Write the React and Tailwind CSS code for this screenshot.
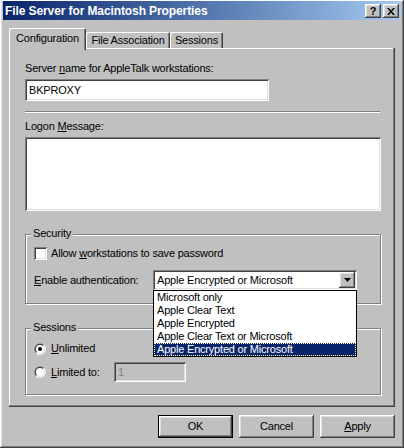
const raised =
  "shadow-[inset_-1px_-1px_#404040,inset_1px_1px_#fff,inset_-2px_-2px_#808080,inset_2px_2px_#dfdfdf]";
const sunken =
  "shadow-[inset_1px_1px_#808080,inset_-1px_-1px_#fff,inset_2px_2px_#404040,inset_-2px_-2px_#dfdfdf]";

const Group = ({ label, className, children }) => (
  <div
    className={`relative border border-[#808080] shadow-[inset_1px_1px_#fff,1px_1px_#fff] ${className}`}
  >
    <span className="absolute -top-[8px] left-[5px] bg-[#c0c0c0] px-[2px] leading-[13px]">
      {label}
    </span>
    {children}
  </div>
);

const Radio = ({ checked }) => (
  <svg width="12" height="12" viewBox="0 0 12 12" className="shrink-0">
    <path d="M10.24 1.76A6 6 0 0 0 1.76 10.24Z" fill="#808080" />
    <path d="M10.24 1.76A6 6 0 0 1 1.76 10.24Z" fill="#fff" />
    <path d="M9.54 2.46A5 5 0 0 0 2.46 9.54Z" fill="#404040" />
    <path d="M9.54 2.46A5 5 0 0 1 2.46 9.54Z" fill="#dfdfdf" />
    <circle cx="6" cy="6" r="4" fill="#fff" />
    {checked && <circle cx="6" cy="6" r="2" fill="#000" />}
  </svg>
);

const options = [
  "Microsoft only",
  "Apple Clear Text",
  "Apple Encrypted",
  "Apple Clear Text or Microsoft",
  "Apple Encrypted or Microsoft",
];

export default function App() {
  return (
    <div
      className={`w-[404px] h-[448px] bg-[#c0c0c0] pt-[1px] px-[3px] flex flex-col text-[11px] leading-[13px] tracking-[-0.2px] text-black font-['Liberation_Sans',Arial,sans-serif] ${raised}`}
    >
      {/* title bar */}
      <div className="h-[19px] flex items-center justify-between bg-gradient-to-r from-[#0a246a] to-[#a6caf0] pl-[2px] pr-[2px] pt-[1px]">
        <span className="text-white font-bold text-[12px] tracking-[-0.1px]">
          File Server for Macintosh Properties
        </span>
        <div className="flex gap-[2px]">
          <div
            className={`w-[16px] h-[14px] bg-[#c0c0c0] flex items-center justify-center font-bold text-[11px] ${raised}`}
          >
            ?
          </div>
          <div
            className={`w-[16px] h-[14px] bg-[#c0c0c0] flex items-center justify-center ${raised}`}
          >
            <svg width="8" height="7" viewBox="0 0 8 7">
              <path d="M0 0h2l2 2.5L6 0h2L5 3.5 8 7H6L4 4.5 2 7H0l3-3.5Z" fill="#000" />
            </svg>
          </div>
        </div>
      </div>

      <div className="flex flex-col pt-[8px] pl-[6px] pr-[6px]">
        {/* tabs */}
        <div className="flex items-end h-[20px]">
          <div className="relative z-10 h-[22px] -mb-[2px] w-[77px] bg-[#c0c0c0] rounded-t-[2px] flex justify-center pt-[4px] shadow-[inset_1px_1px_#fff,inset_-1px_0_#404040,inset_-2px_0_#808080]">
            Configuration
          </div>
          <div className="h-[16px] w-[84px] bg-[#c0c0c0] rounded-t-[2px] flex justify-center pt-[2px] shadow-[inset_1px_1px_#fff,inset_-1px_0_#404040,inset_-2px_0_#808080]">
            File Association
          </div>
          <div className="h-[16px] w-[53px] bg-[#c0c0c0] rounded-t-[2px] flex justify-center pt-[2px] shadow-[inset_1px_1px_#fff,inset_-1px_0_#404040,inset_-2px_0_#808080]">
            Sessions
          </div>
        </div>

        {/* panel */}
        <div className="h-[359px] bg-[#c0c0c0] pt-[14px] pl-[16px] pr-[14px] flex flex-col shadow-[inset_-1px_-1px_#404040,inset_-2px_-2px_#808080,inset_1px_1px_#fff]">
          <div>
            Server <u>n</u>ame for AppleTalk workstations:
          </div>
          <div
            className={`mt-[4px] w-[244px] h-[22px] bg-white flex items-center pl-[4px] ${sunken}`}
          >
            BKPROXY
          </div>
          <div className="mt-[10px] mr-[1px] h-[2px] border-t border-t-[#808080] border-b border-b-white" />

          <div className="mt-[7px]">
            Logon <u>M</u>essage:
          </div>
          <div className={`mt-[4px] h-[74px] bg-white ${sunken}`} />

          <Group label="Security" className="mt-[23px] pt-[12px] pb-[13px] pl-[8px]">
            <div className="flex items-center gap-[4px]">
              <div className={`w-[13px] h-[13px] bg-white ${sunken}`} />
              <span>
                Allow <u>w</u>orkstations to save password
              </span>
            </div>
            <div className="flex items-center mt-[10px]">
              <span className="w-[119px]">
                <u>E</u>nable authentication:
              </span>
              <div
                className={`relative w-[204px] h-[20px] bg-white p-[2px] flex ${sunken}`}
              >
                <span className="flex-1 pl-[2px] leading-[16px]">
                  Apple Encrypted or Microsoft
                </span>
                <div
                  className={`w-[16px] h-[16px] bg-[#c0c0c0] flex items-center justify-center ${raised}`}
                >
                  <svg width="7" height="4" viewBox="0 0 7 4">
                    <path d="M0 0h7L3.5 4Z" fill="#000" />
                  </svg>
                </div>
                <div className="absolute top-full left-0 z-20 w-[204px] bg-white border border-black flex flex-col">
                  {options.map((o, i) =>
                    i === options.length - 1 ? (
                      <div
                        key={o}
                        className="h-[13px] pl-[3px] bg-[#0a246a] text-white outline-1 outline-dotted outline-[#ffffc8] -outline-offset-1"
                      >
                        {o}
                      </div>
                    ) : (
                      <div key={o} className="h-[13px] pl-[3px]">
                        {o}
                      </div>
                    )
                  )}
                </div>
              </div>
            </div>
          </Group>

          <Group label="Sessions" className="mt-[24px] pt-[13px] pb-[12px] pl-[8px]">
            <div className="flex items-center gap-[5px] h-[13px]">
              <Radio checked />
              <span>
                <u>U</u>nlimited
              </span>
            </div>
            <div className="flex items-center gap-[5px] mt-[7px] h-[20px]">
              <Radio />
              <span className="w-[58px]">
                <u>L</u>imited to:
              </span>
              <div
                className={`w-[72px] h-[20px] bg-[#c0c0c0] pl-[4px] flex items-center text-[#808080] ${sunken}`}
              >
                1
              </div>
            </div>
          </Group>
        </div>

        {/* buttons */}
        <div className="mt-[8px] flex justify-end gap-[6px]">
          <div className="w-[75px] h-[23px] border border-black">
            <div
              className={`w-full h-full bg-[#c0c0c0] flex items-center justify-center ${raised}`}
            >
              OK
            </div>
          </div>
          <div
            className={`w-[75px] h-[23px] bg-[#c0c0c0] flex items-center justify-center ${raised}`}
          >
            Cancel
          </div>
          <div
            className={`w-[75px] h-[23px] bg-[#c0c0c0] flex items-center justify-center ${raised}`}
          >
            <span>
              <u>A</u>pply
            </span>
          </div>
        </div>
      </div>
    </div>
  );
}
